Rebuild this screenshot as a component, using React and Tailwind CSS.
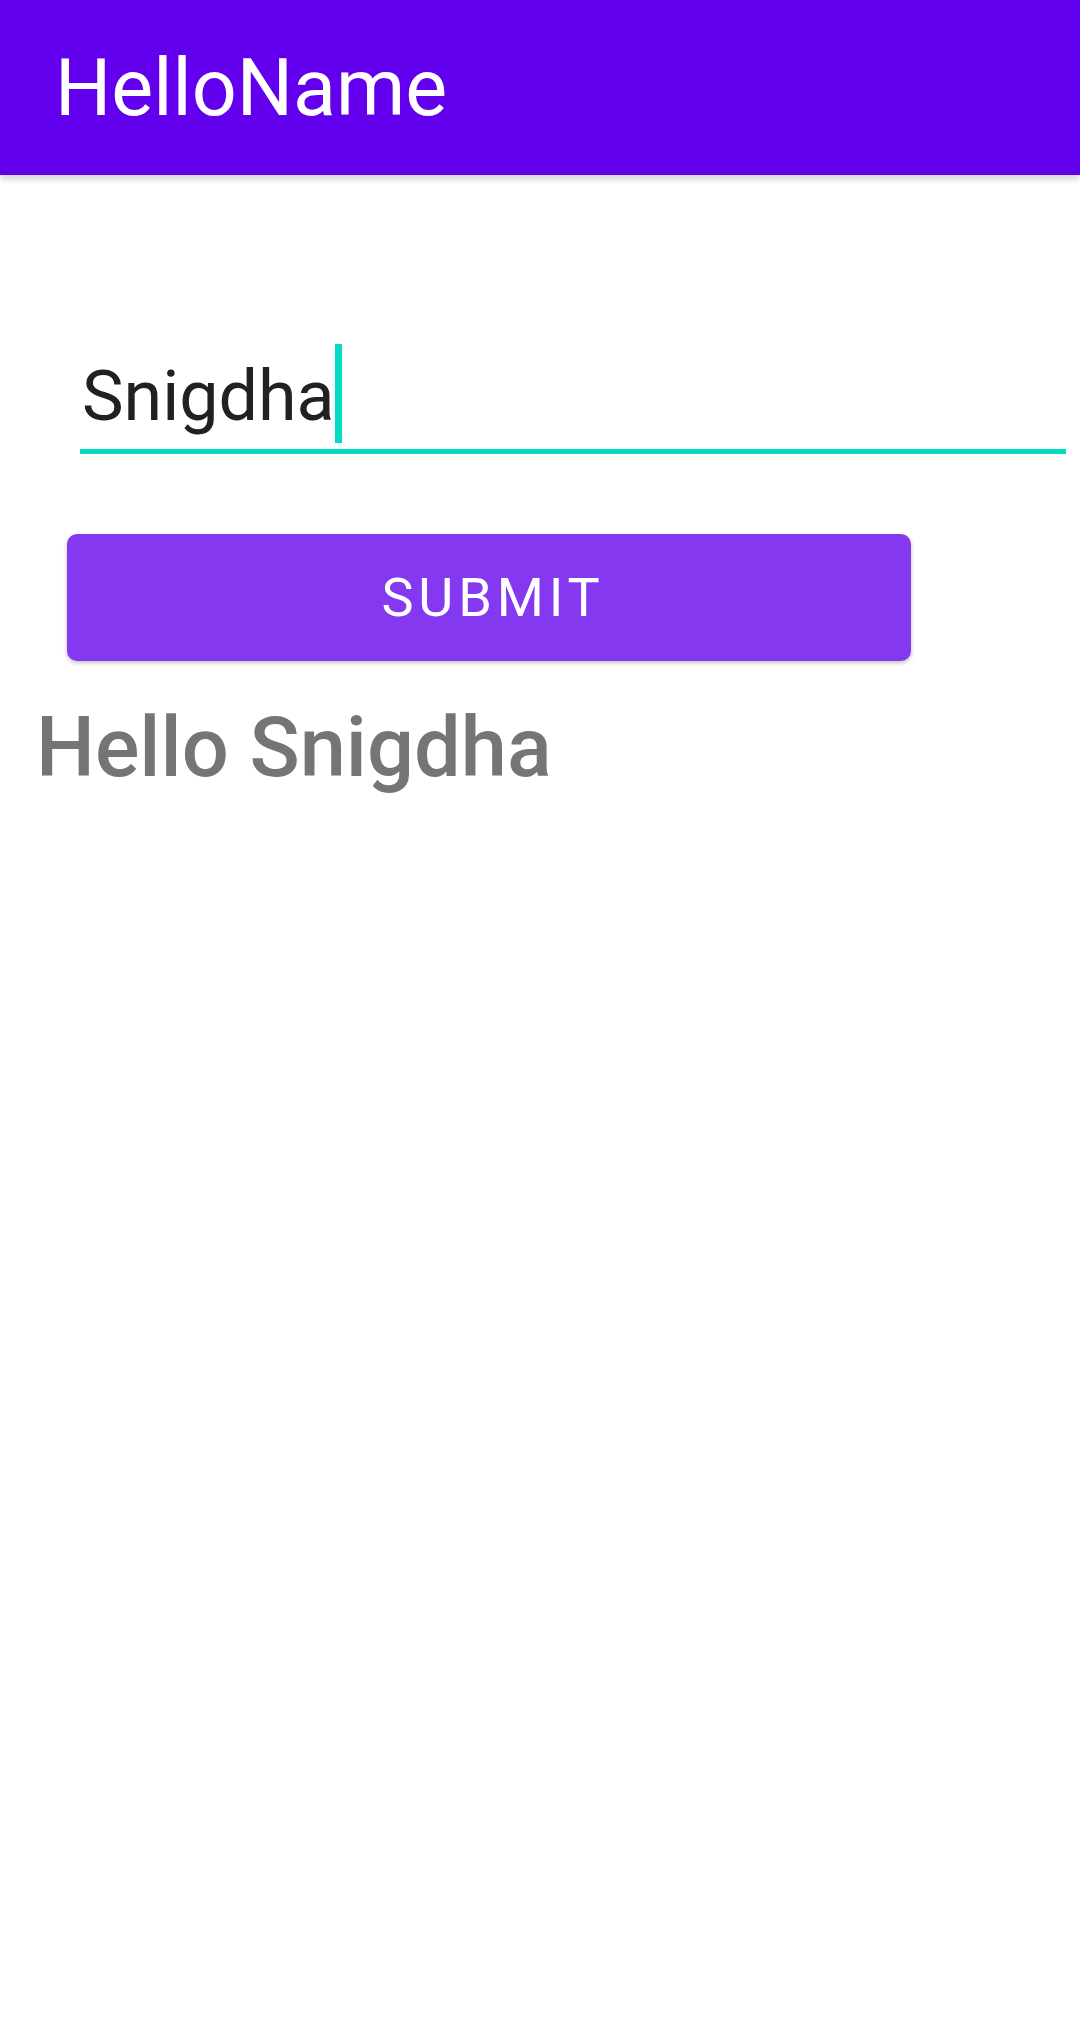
import React from "react";

function App() {
  return (
    <div className="min-h-[2033px] w-[1080px] bg-white font-['Roboto',sans-serif]">
      {/* App bar */}
      <header className="flex h-[175px] items-center bg-[#6200ee] pl-[55px] shadow-[0_4px_6px_rgba(0,0,0,0.18)]">
        <h1 className="mt-[2px] text-[79px] leading-none font-normal text-white">HelloName</h1>
      </header>

      {/* Name field */}
      <div className="ml-[80px] mr-[14px] mt-[169px]">
        <div className="flex h-[99px] items-start">
          <span className="mt-[17px] pl-[2px] text-[70px] leading-none text-[#212121]">Snigdha</span>
          <span className="h-full w-[7px] bg-[#03dac5]"></span>
        </div>
        <div className="mt-[6px] h-[5px] bg-[#03dac5]"></div>
      </div>

      {/* Submit button */}
      <button className="ml-[67px] mt-[80px] flex h-[127px] w-[844px] items-center justify-center rounded-[10px] bg-[#8438f0] shadow-[0_2px_4px_rgba(0,0,0,0.25)]">
        <span className="pl-[8px] text-[54px] leading-none tracking-[0.09em] text-white">SUBMIT</span>
      </button>

      {/* Greeting */}
      <p className="ml-[36px] mt-[45px] text-[83px] leading-none font-medium text-[#757575]">Hello Snigdha</p>
    </div>
  );
}

export default App;
